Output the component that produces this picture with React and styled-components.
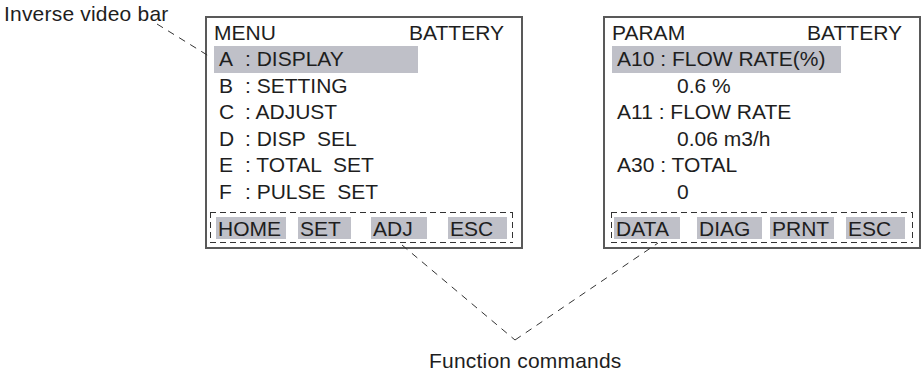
import React from "react";
import styled, { createGlobalStyle } from "styled-components";

const GlobalStyle = createGlobalStyle`
  body {
    margin: 0;
    background: #fff;
    font-family: "Liberation Sans", Arial, sans-serif;
    color: #1e1e1e;
  }
`;

const BAR_GREY = "#bfc0c8";
const INK = "#333";

const Page = styled.div`
  position: relative;
  width: 921px;
  height: 374px;
  overflow: hidden;
`;

const TopRow = styled.div`
  display: flex;
  align-items: flex-start;
`;

const Callout = styled.div`
  box-sizing: border-box;
  width: 205px;
  padding: 2px 0 0 4px;
  font-size: 21px;
  line-height: 24px;
  letter-spacing: 0.2px;
  white-space: nowrap;
`;

const PanelPair = styled.div`
  display: flex;
  gap: 80px;
  margin-top: 16px;
`;

const Panel = styled.div`
  box-sizing: border-box;
  display: flex;
  flex-direction: column;
  width: 318px;
  height: 233px;
  padding-top: 2px;
  border: 2px solid #595959;
  font-size: 21px;
`;

const Header = styled.div`
  display: flex;
  justify-content: space-between;
  height: 26px;
  line-height: 26px;
  padding: 0 17px 0 7px;
`;

const Row = styled.div`
  display: flex;
  box-sizing: border-box;
  width: ${(p) => (p.$bar ? `${p.$bar}px` : "auto")};
  height: 26.6px;
  margin-left: 7px;
  padding-left: ${(p) => p.$indent || 5}px;
  line-height: 26.6px;
  white-space: pre;
  background: ${(p) => (p.$active ? BAR_GREY : "transparent")};
`;

const Key = styled.span`
  display: inline-block;
  width: ${(p) => (p.$w ? `${p.$w}px` : "auto")};
`;

const dash = (dir) =>
  `repeating-linear-gradient(${dir}, ${INK} 0 6px, transparent 6px 10px)`;

const FunctionBar = styled.div`
  box-sizing: border-box;
  display: flex;
  align-items: flex-start;
  width: ${(p) => p.$w}px;
  height: 31px;
  margin: 6px 0 0 ${(p) => p.$offset}px;
  padding-top: 5px;
  background:
    ${dash("90deg")} top left / 100% 1px no-repeat,
    ${dash("90deg")} bottom left / 100% 1px no-repeat,
    ${dash("180deg")} top left / 1px 100% no-repeat,
    ${dash("180deg")} top right / 1px 100% no-repeat;
`;

const FnKey = styled.div`
  box-sizing: border-box;
  width: ${(p) => p.$w}px;
  height: 22px;
  margin-left: ${(p) => p.$ml}px;
  padding-left: 2px;
  line-height: 23px;
  white-space: nowrap;
  overflow: hidden;
  background: ${BAR_GREY};
`;

const Caption = styled.div`
  margin-top: 100px;
  padding-left: 429px;
  font-size: 21px;
  line-height: 24px;
  letter-spacing: 0.2px;
`;

const Leaders = styled.svg`
  position: absolute;
  inset: 0;
  pointer-events: none;
`;

const menuPanel = {
  title: "MENU",
  bar: 204,
  keyWidth: 26,
  offset: 3,
  boxWidth: 303,
  rows: [
    { key: "A", text: ": DISPLAY", active: true },
    { key: "B", text: ": SETTING" },
    { key: "C", text: ": ADJUST" },
    { key: "D", text: ": DISP  SEL" },
    { key: "E", text: ": TOTAL  SET" },
    { key: "F", text: ": PULSE  SET" },
  ],
  keys: [
    { label: "HOME", w: 70, ml: 6 },
    { label: "SET", w: 53, ml: 12 },
    { label: "ADJ", w: 56, ml: 20 },
    { label: "ESC", w: 59, ml: 21 },
  ],
};

const paramPanel = {
  title: "PARAM",
  bar: 229,
  offset: 6,
  boxWidth: 302,
  rows: [
    { key: "A10", text: " : FLOW RATE(%)", active: true },
    { text: "0.6 %", indent: 65 },
    { key: "A11", text: " : FLOW RATE" },
    { text: "0.06 m3/h", indent: 65 },
    { key: "A30", text: " : TOTAL" },
    { text: "0", indent: 65 },
  ],
  keys: [
    { label: "DATA", w: 66, ml: 3 },
    { label: "DIAG", w: 65, ml: 17 },
    { label: "PRNT", w: 64, ml: 8 },
    { label: "ESC", w: 59, ml: 12 },
  ],
};

function Display({ panel }) {
  return (
    <Panel>
      <Header>
        <span>{panel.title}</span>
        <span>BATTERY</span>
      </Header>
      {panel.rows.map((row, i) => (
        <Row
          key={i}
          $active={row.active}
          $bar={row.active ? panel.bar : null}
          $indent={row.indent}
        >
          {row.key && <Key $w={panel.keyWidth}>{row.key}</Key>}
          {row.text}
        </Row>
      ))}
      <FunctionBar $w={panel.boxWidth} $offset={panel.offset}>
        {panel.keys.map((k) => (
          <FnKey key={k.label} $w={k.w} $ml={k.ml}>
            {k.label}
          </FnKey>
        ))}
      </FunctionBar>
    </Panel>
  );
}

export default function App() {
  return (
    <>
      <GlobalStyle />
      <Page>
        <TopRow>
          <Callout>Inverse video bar</Callout>
          <PanelPair>
            <Display panel={menuPanel} />
            <Display panel={paramPanel} />
          </PanelPair>
        </TopRow>
        <Caption>Function commands</Caption>
        <Leaders width="921" height="374" viewBox="0 0 921 374">
          <g stroke={INK} strokeWidth="1" strokeDasharray="7 6" fill="none">
            <line x1="157" y1="24" x2="212" y2="58" />
            <line x1="402" y1="245" x2="515" y2="340" />
            <line x1="515" y1="340" x2="658" y2="243" />
          </g>
        </Leaders>
      </Page>
    </>
  );
}
